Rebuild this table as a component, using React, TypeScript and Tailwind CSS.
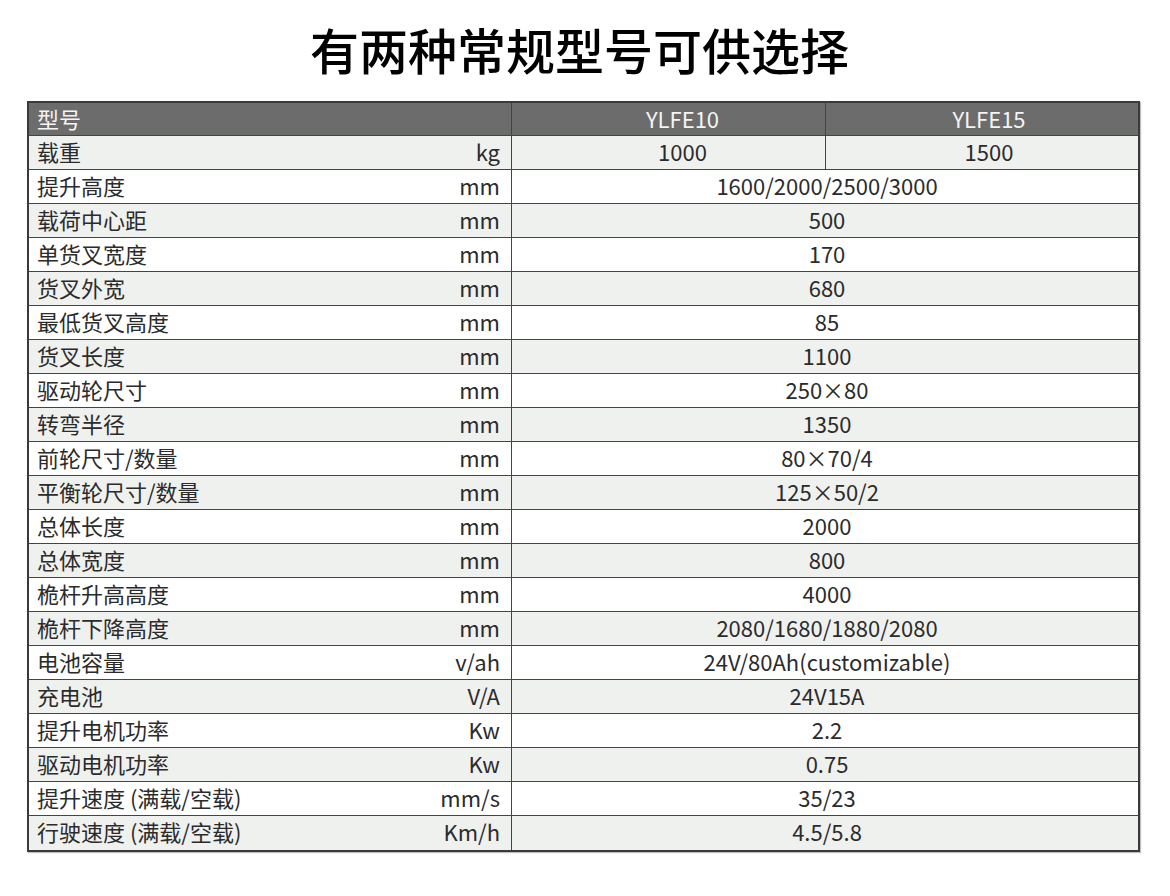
import React from "react";

const rows: [string, string, string, string?][] = [
  ["载重", "kg", "1000", "1500"],
  ["提升高度", "mm", "1600/2000/2500/3000"],
  ["载荷中心距", "mm", "500"],
  ["单货叉宽度", "mm", "170"],
  ["货叉外宽", "mm", "680"],
  ["最低货叉高度", "mm", "85"],
  ["货叉长度", "mm", "1100"],
  ["驱动轮尺寸", "mm", "250×80"],
  ["转弯半径", "mm", "1350"],
  ["前轮尺寸/数量", "mm", "80×70/4"],
  ["平衡轮尺寸/数量", "mm", "125×50/2"],
  ["总体长度", "mm", "2000"],
  ["总体宽度", "mm", "800"],
  ["桅杆升高高度", "mm", "4000"],
  ["桅杆下降高度", "mm", "2080/1680/1880/2080"],
  ["电池容量", "v/ah", "24V/80Ah(customizable)"],
  ["充电池", "V/A", "24V15A"],
  ["提升电机功率", "Kw", "2.2"],
  ["驱动电机功率", "Kw", "0.75"],
  ["提升速度 (满载/空载)", "mm/s", "35/23"],
  ["行驶速度 (满载/空载)", "Km/h", "4.5/5.8"],
];

const font = { fontFamily: '"Noto Sans CJK SC", "Noto Sans", sans-serif' };

export default function App() {
  return (
    <div className="w-[1170px] h-[896px] bg-white text-[#2b2b2b]" style={font}>
      <div className="h-[101px] flex items-center justify-center pb-[4px] pr-[11px]">
        <h1 className="text-[49px] leading-none font-medium text-black">
          有两种常规型号可供选择
        </h1>
      </div>
      <div className="ml-[27px] w-[1113px] border-2 border-[#3a3a3a] shadow-[1px_1px_1px_rgba(0,0,0,0.25)]">
        <div className="flex h-[33px] bg-[#6c6c6c] text-[#f4f4f4] text-[22px] border-b border-[#444]">
          <div className="w-[483px] border-r border-[#444] flex items-center pl-[8px] pb-[2px]">型号</div>
          <div className="w-[314px] border-r border-[#444] flex items-center justify-center pl-[28px] pb-[2px]">YLFE10</div>
          <div className="flex-1 flex items-center justify-center pl-[14px] pb-[2px]">YLFE15</div>
        </div>
        {rows.map(([label, unit, v1, v2], i) => (
          <div
            key={i}
            className={`flex h-[34px] text-[22px] ${i < rows.length - 1 ? "border-b border-[#444]" : ""} ${i % 2 === 0 ? "bg-[#eff1ef]" : "bg-white"}`}
          >
            <div className="w-[483px] border-r border-[#444] flex items-center justify-between pl-[8px] pr-[11px] pb-[3px]">
              <span>{label}</span>
              <span>{unit}</span>
            </div>
            {v2 ? (
              <>
                <div className="w-[314px] border-r border-[#444] flex items-center justify-center pl-[28px] pb-[3px]">{v1}</div>
                <div className="flex-1 flex items-center justify-center pl-[14px] pb-[3px]">{v2}</div>
              </>
            ) : (
              <div className="flex-1 flex items-center justify-center pl-[4px] pb-[3px]">{v1}</div>
            )}
          </div>
        ))}
      </div>
    </div>
  );
}
